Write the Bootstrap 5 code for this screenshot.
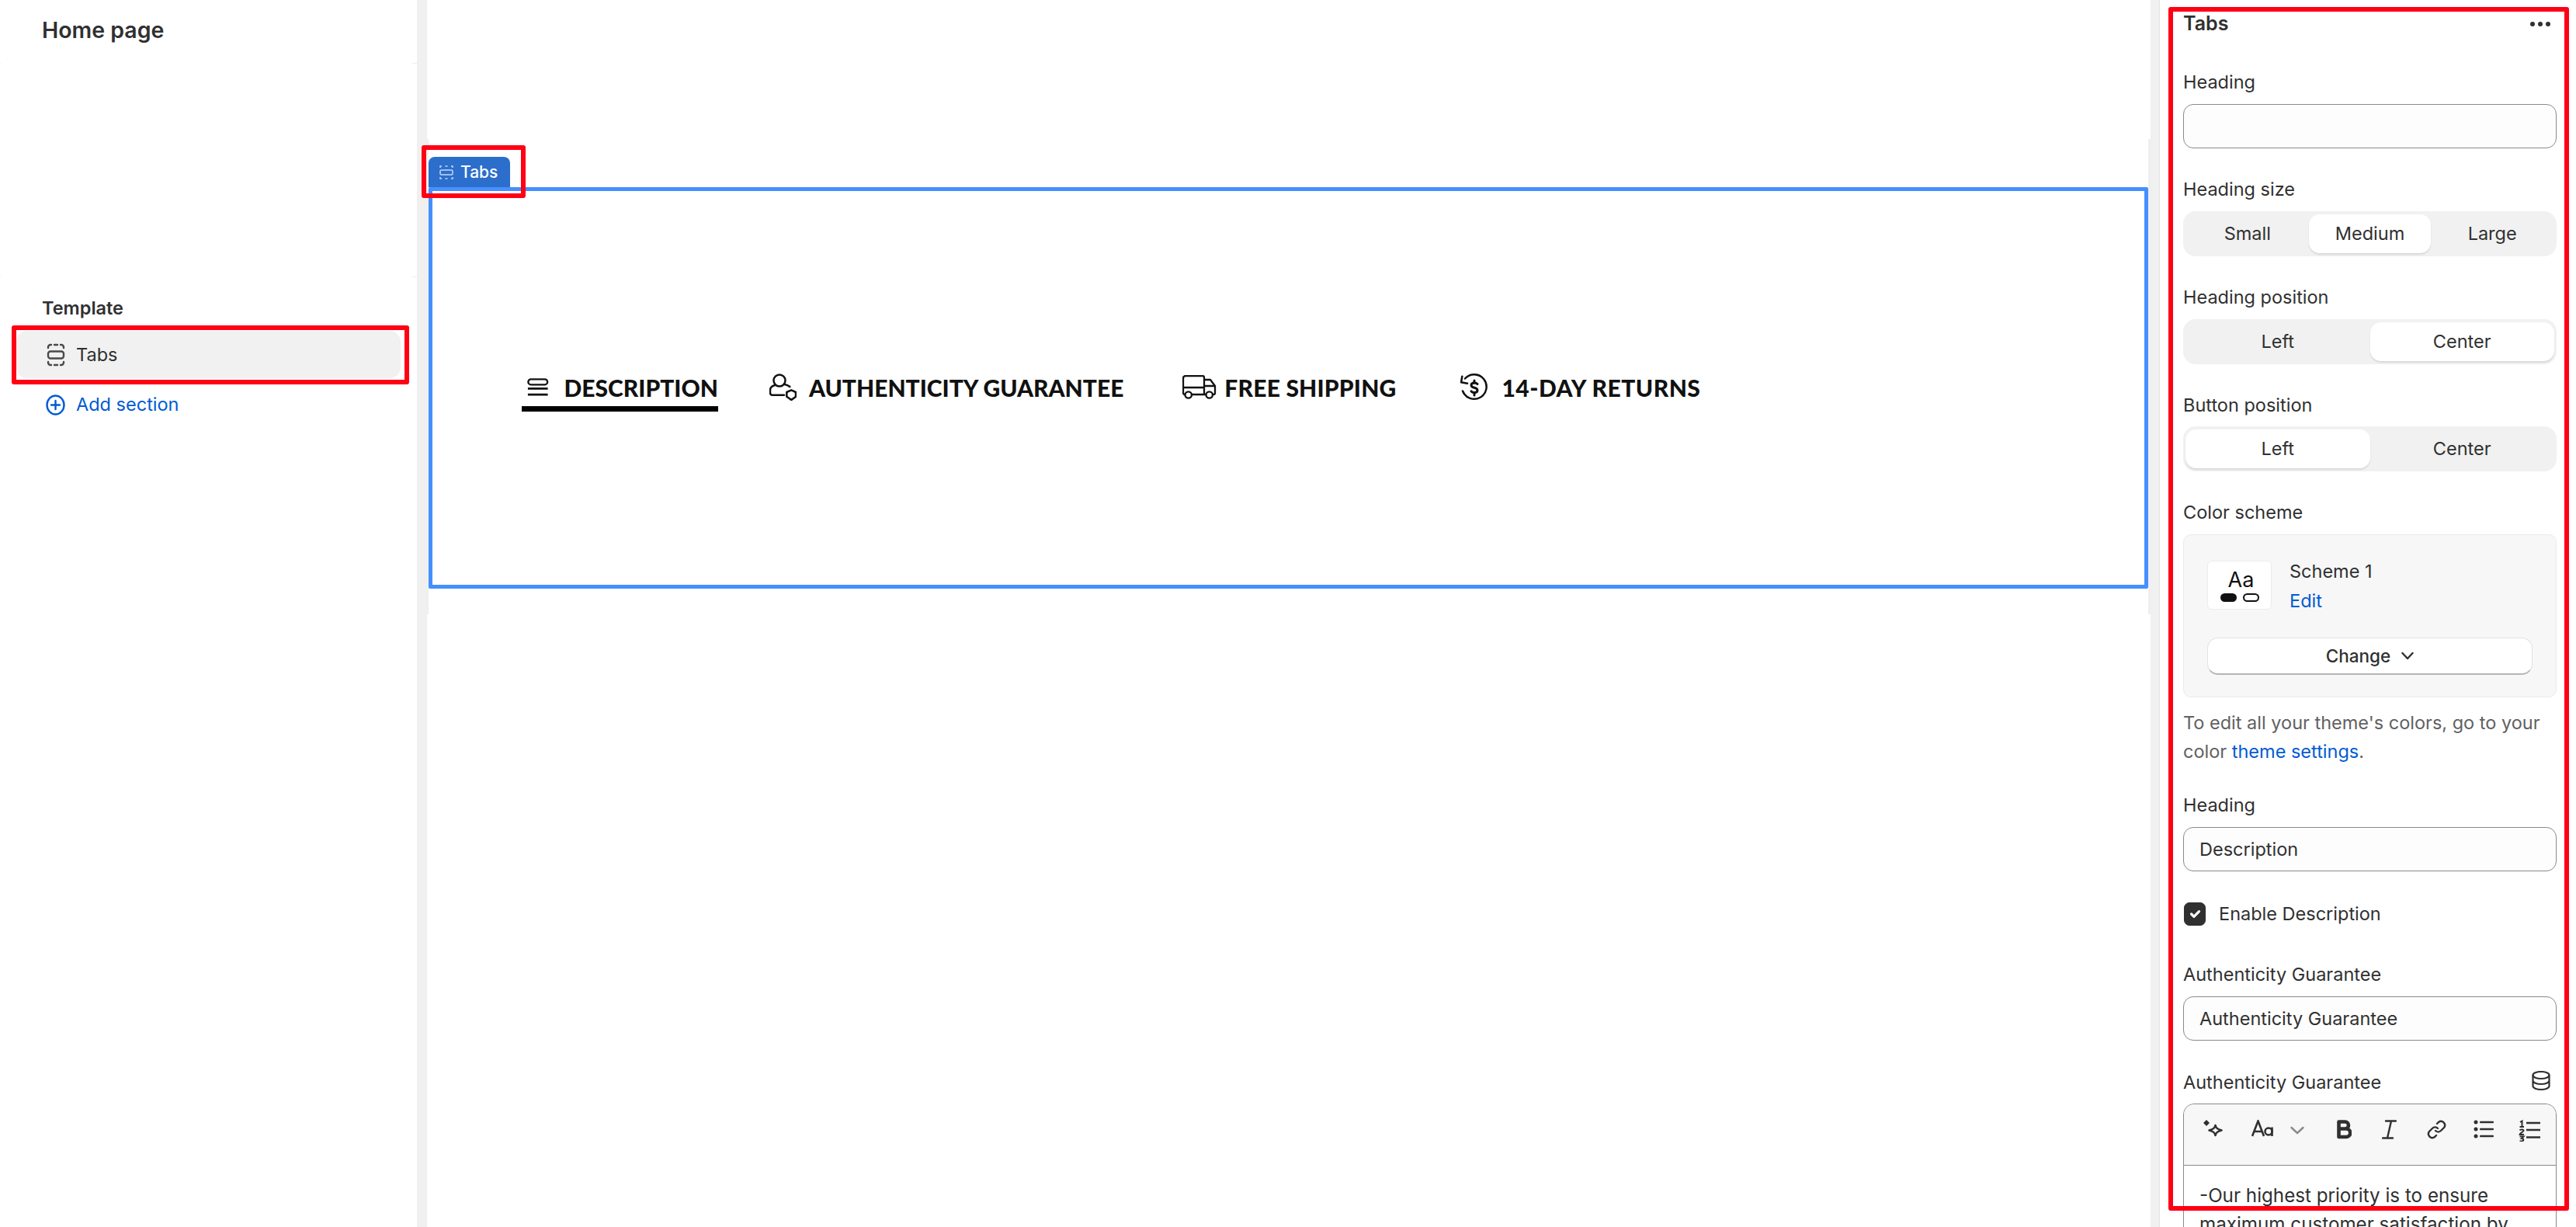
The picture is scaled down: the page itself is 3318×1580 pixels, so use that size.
<!DOCTYPE html>
<html lang="en">
<head>
<meta charset="utf-8">
<title>Home page</title>
<link href="https://cdn.jsdelivr.net/npm/bootstrap@5.3.0/dist/css/bootstrap.min.css" rel="stylesheet">
<style>
html,body{height:100%}
body{font-family:Inter,"Liberation Sans",sans-serif;font-size:23.5px;color:#303030;background:#fff;overflow:hidden;position:relative}
.shell{height:1580px}
.side-left{width:537px;flex:none;padding:0 21px;background:linear-gradient(#eee,#eee) 531px 81px/6px 1px no-repeat,linear-gradient(#eee,#eee) 531px 356px/6px 1px no-repeat,linear-gradient(#eee,#eee) 0 81px/1px 1px no-repeat,linear-gradient(#eee,#eee) 0 356px/1px 1px no-repeat}
.page-title{padding-left:33px;height:78px;line-height:78px;font-size:28.5px;font-weight:600}
.tpl-title{margin-top:304px;padding-left:33px;height:30px;line-height:30px;font-size:23.5px;font-weight:600}
.tree-row{height:61px;margin-top:14px;background:#f1f1f1;border-radius:14px;padding-left:39px;gap:14px}
.add-row{margin-top:19px;padding-left:38px;gap:14px;height:30px;color:#005bd3}
.gutter{flex:none;background:#f0f0f0}
.gutter-l{width:13px}
.gutter-r{width:12px;border-right:1px solid #e3e3e3}
.canvas{flex:1 1 auto;min-width:0}
.canvas-strip{margin-top:179px;height:612px;background:#efefef;padding:0 3px 0 2px}
.canvas-inner{height:100%;background:#fff;padding-top:23px}
.sec-tag{width:105px;height:39px;background:#2c6ecb;color:#fff;border-radius:8px 8px 0 0;font-size:21px;font-weight:500;padding-left:14px;gap:9px}
.sec-frame{height:517px;border:5px solid #458fff;border-radius:2px;padding:0 0 2px 115px}
.tab-item{font-family:Lato,"Liberation Sans",sans-serif;font-weight:900;font-size:30px;color:#111;text-transform:uppercase;white-space:nowrap;position:relative;line-height:36px}
.tab-a{gap:20px;width:253px;padding-left:7px;margin-right:66px}
.tab-a::after{content:"";position:absolute;left:0;right:0;top:42px;height:7px;background:#000}
.tab-b{gap:16px;margin-right:76px}
.tab-c{gap:10px;margin-right:83px;letter-spacing:.2px}
.tab-d{gap:18px;letter-spacing:.5px}
.side-right{width:536px;flex:none;padding:0 25px 0 30px;overflow:hidden}
.panel-head{height:62px;font-size:25px;font-weight:600}
.fld-label{height:30px;line-height:30px;margin-bottom:13px}
.fld-label-tight{margin-bottom:12px}
.fld-label-first{margin-top:29px}
.fld{margin-bottom:38px}
.fld-wide{margin-bottom:39px}
.fld-wider{margin-bottom:40px}
.fld-input.form-control{height:57px;border:1.5px solid #8a8a8a;border-radius:13px;background:#fdfdfd;font-size:23.5px;color:#303030;padding:0 20px;box-shadow:none}
.seg{background:#f1f1f1;border-radius:16px;height:58px;padding:4px 3px}
.seg-3{padding:4px}
.seg-opt{flex:1 1 0;border-radius:14px;text-align:center;line-height:50px;height:50px}
.seg-on{background:#fff;box-shadow:0 2px 2px rgba(0,0,0,.1)}
.scheme-card{height:210px;background:#f7f7f7;border:1px solid #ebebeb;border-radius:10px;padding:33px 30px 0}
.swatch{width:83px;height:63px;background:#fff;border:1px solid #ececec;border-radius:6px;padding-top:10px;line-height:1}
.swatch-aa{font-size:27px;color:#111;text-align:center;height:31px;padding-left:4px}
.swatch-pills{gap:8px}
.pill-dark,.pill-light{width:21px;height:11px;border-radius:6px;border:2px solid #111}
.pill-dark{background:#111}
.scheme-name{margin-left:23px;line-height:38px;margin-top:-5px}
.lnk{color:#005bd3;text-decoration:none}
.chg-btn.btn{height:48px;margin-top:28px;width:419px;background:#fff;border:1px solid #e3e3e3;border-bottom:2px solid #b5b5b5;border-radius:14px;font-size:22.5px;font-weight:500;color:#303030;gap:14px;padding:0}
.help-text{margin-top:15px;margin-bottom:36px;color:#616161;line-height:36.5px}
.chk-row{height:30px;margin-bottom:48px;gap:17px;padding-left:1px}
.chk-row .form-check-input{width:28px;height:30px;margin:0;background-color:#303030;border-color:#303030;border-radius:7px;background-size:22px}
.editor{border:1.5px solid #8a8a8a;border-radius:14px 14px 0 0;height:400px}
.editor-bar{height:79px;background:#f7f7f7;border-bottom:1.5px solid #8a8a8a;border-radius:14px 14px 0 0;position:relative}
.editor-body{padding:20px 20px;line-height:37px;font-size:24.2px}
.tbi{position:absolute;top:20px}
.mark-red{position:absolute;border:6px solid #ff0014;border-radius:3px;pointer-events:none}
.mark-a{left:15px;top:419px;width:512px;height:76px}
.mark-b{left:543px;top:187px;width:134px;height:68px}
.mark-c{left:2793px;top:9px;width:516px;height:1550px}
</style>
</head>
<body>
<div class="shell d-flex">
  <aside class="side-left">
    <div class="page-title">Home page</div>
    <div class="tpl-title">Template</div>
    <div class="tree-row d-flex align-items-center">
      <svg width="24" height="30" viewBox="0 0 24 30" fill="none" stroke="#4a4a4a" stroke-width="2.4" stroke-linecap="round"><path d="M2 6V5a3 3 0 0 1 3-3h1M10 2h4M18 2h1a3 3 0 0 1 3 3v1M2 24v1a3 3 0 0 0 3 3h1M10 28h4M18 28h1a3 3 0 0 0 3-3v-1"/><rect x="2" y="10.500" width="20" height="9" rx="3"/></svg>
      <span>Tabs</span>
    </div>
    <div class="add-row d-flex align-items-center">
      <svg width="25" height="27" viewBox="0 0 25 27" fill="none" stroke="#005bd3" stroke-width="2.400" stroke-linecap="round"><ellipse cx="12.500" cy="13.500" rx="11" ry="12"/><path d="M12.500 8v11M7 13.500h11"/></svg>
      <span>Add section</span>
    </div>
  </aside>
  <div class="gutter gutter-l"></div>
  <main class="canvas">
    <div class="canvas-strip">
      <div class="canvas-inner">
        <div class="sec-tag d-flex align-items-center">
          <svg width="18" height="18" viewBox="0 0 18 18" fill="none" stroke="#c3d8f5" stroke-width="1.500"><path d="M1 3V1h2M7.500 1h3M15 1h2v2M1 15v2h2M7.500 17h3M15 17h2v-2"/><rect x="1" y="6" width="16" height="6" rx="1.500"/></svg>
          <span>Tabs</span>
        </div>
        <section class="sec-frame d-flex align-items-center">
          <div class="tab-item tab-a d-flex align-items-center">
            <svg width="30" height="25" viewBox="0 0 30 25" fill="none" stroke="#111" stroke-width="2.500"><rect x="1.500" y="1.500" width="27" height="7.500" rx="3.700"/><path d="M1 14.500h28M1 23h28" stroke-width="3"/></svg>
            <span>Description</span>
          </div>
          <div class="tab-item tab-b d-flex align-items-center">
            <svg width="35" height="35" viewBox="0 0 35 35" fill="none" stroke="#111" stroke-width="2.500" stroke-linejoin="round" stroke-linecap="round"><circle cx="13" cy="9" r="7.500"/><path d="M7.700 14.700C3.500 15.800 1 18 1 21.300V25a2.700 2.700 0 0 0 3 2.700h15"/><path d="M19 13.700c3 .6 5.500 1.500 7.300 3.300"/><path d="M28.300 21.300l5.700 2.700v5.700L28.300 34l-6-4.300V24z"/></svg>
            <span>Authenticity Guarantee</span>
          </div>
          <div class="tab-item tab-c d-flex align-items-center">
            <svg width="44" height="31" viewBox="0 0 44 31" fill="none" stroke="#111" stroke-width="2.300" stroke-linejoin="round"><path d="M3.500 25H3a2 2 0 0 1-2-2V4a3 3 0 0 1 3-3h22a2 2 0 0 1 2 2v22H12M1 16h27M28 6h8l6 8v9a2 2 0 0 1-2 2h-1M30.500 25H28M28 14h14"/><circle cx="7.700" cy="25.500" r="4.200"/><circle cx="34.700" cy="25.500" r="4.200"/></svg>
            <span>Free Shipping</span>
          </div>
          <div class="tab-item tab-d d-flex align-items-center">
            <svg width="35" height="35" viewBox="0 0 35 35" fill="none" stroke="#111" stroke-width="2.500" stroke-linecap="round" stroke-linejoin="round"><path d="M6 6.500A15.800 15.800 0 1 1 3 22.500"/><path d="M2.300 3.700L1 11.300l8 1.400"/><path d="M22 13.500c-.8-1-2-1.500-4-1.500-2.500 0-4 1.300-4 3 0 4.500 8 2 8 6.500 0 1.800-1.700 3-4 3-2 0-3.300-.7-4-1.700" stroke-width="3"/><path d="M18 9v3M18 25v3" stroke-width="3"/></svg>
            <span>14-Day Returns</span>
          </div>
        </section>
      </div>
    </div>
  </main>
  <div class="gutter gutter-r"></div>
  <aside class="side-right">
    <div class="panel-head d-flex justify-content-between align-items-center">
      <span>Tabs</span>
      <svg class="me-2" width="26" height="6" viewBox="0 0 26 6" fill="#303030"><circle cx="3" cy="3" r="3"/><circle cx="13" cy="3" r="3"/><circle cx="23" cy="3" r="3"/></svg>
    </div>
    <div class="fld">
      <div class="fld-label fld-label-first">Heading</div>
      <input class="form-control fld-input" type="text" value="" aria-label="Heading">
    </div>
    <div class="fld">
      <div class="fld-label">Heading size</div>
      <div class="seg seg-3 d-flex"><div class="seg-opt">Small</div><div class="seg-opt seg-on">Medium</div><div class="seg-opt">Large</div></div>
    </div>
    <div class="fld">
      <div class="fld-label">Heading position</div>
      <div class="seg d-flex"><div class="seg-opt">Left</div><div class="seg-opt seg-on">Center</div></div>
    </div>
    <div class="fld">
      <div class="fld-label fld-label-tight">Button position</div>
      <div class="seg d-flex"><div class="seg-opt seg-on">Left</div><div class="seg-opt">Center</div></div>
    </div>
    <div>
      <div class="fld-label">Color scheme</div>
      <div class="scheme-card">
        <div class="d-flex">
          <div class="swatch">
            <div class="swatch-aa">Aa</div>
            <div class="swatch-pills d-flex justify-content-center"><span class="pill-dark"></span><span class="pill-light"></span></div>
          </div>
          <div class="scheme-name"><div>Scheme 1</div><a class="lnk d-block" href="#">Edit</a></div>
        </div>
        <button class="btn chg-btn d-flex align-items-center justify-content-center" type="button">Change
          <svg width="16" height="11" viewBox="0 0 16 11" fill="none" stroke="#303030" stroke-width="2.400" stroke-linecap="round" stroke-linejoin="round"><path d="M1.500 2l6.500 7 6.500-7"/></svg>
        </button>
      </div>
      <div class="help-text">To edit all your theme's colors, go to your color <a class="lnk" href="#">theme settings</a>.</div>
    </div>
    <div class="fld fld-wider">
      <div class="fld-label">Heading</div>
      <input class="form-control fld-input" type="text" value="Description" aria-label="Heading">
    </div>
    <div class="chk-row d-flex align-items-center">
      <input class="form-check-input" type="checkbox" checked aria-label="Enable Description">
      <span>Enable Description</span>
    </div>
    <div class="fld fld-wide">
      <div class="fld-label">Authenticity Guarantee</div>
      <input class="form-control fld-input" type="text" value="Authenticity Guarantee" aria-label="Authenticity Guarantee">
    </div>
    <div>
      <div class="fld-label fld-label-tight d-flex justify-content-between">
        <span>Authenticity Guarantee</span>
        <svg class="me-2" width="24" height="25" viewBox="0 0 24 25" fill="none" stroke="#303030" stroke-width="2.200"><ellipse cx="12" cy="5.500" rx="10.500" ry="4.500"/><path d="M1.500 5.500v14c0 2.500 4.700 4.500 10.500 4.500s10.500-2 10.500-4.500v-14M1.500 12.500c0 2.500 4.700 4.500 10.500 4.500s10.500-2 10.500-4.500"/></svg>
      </div>
      <div class="editor">
        <div class="editor-bar">
          <svg class="tbi" style="left:25px" width="26" height="26" viewBox="0 0 26 26" fill="none" stroke="#303030" stroke-width="2.600" stroke-linejoin="round"><path d="M15.500 7c.7 3.500 2.300 5.200 8 6.500-5.700 1.300-7.300 3-8 6.500-.7-3.500-2.300-5.200-8-6.500 5.700-1.300 7.300-3 8-6.500z"/><path d="M4 0l4 4-4 4-4-4z" fill="#303030" stroke="none"/></svg>
          <svg class="tbi" style="left:87px" width="28" height="22" viewBox="0 0 28 22" fill="none" stroke="#303030" stroke-width="2.600"><path d="M1 21L8.500 1.500 16 21M3.500 15h10"/><circle cx="22" cy="15" r="4.500"/><path d="M26.500 9.500V21"/></svg>
          <svg class="tbi" style="left:137px;top:28px" width="18" height="11" viewBox="0 0 18 11" fill="none" stroke="#8a8a8a" stroke-width="2.400" stroke-linecap="round" stroke-linejoin="round"><path d="M1.500 2l7.500 7 7.500-7"/></svg>
          <svg class="tbi" style="left:197px" width="19" height="25" viewBox="0 0 19 25" fill="none" stroke="#303030" stroke-width="4.600" stroke-linejoin="round"><path d="M2.500 2.500h8a4.500 4.500 0 0 1 0 9h-8zM2.500 11.500h9.500a5 5 0 0 1 0 10.500h-9.500z"/></svg>
          <svg class="tbi" style="left:255px" width="19" height="25" viewBox="0 0 19 25" fill="none" stroke="#303030" stroke-width="2.400" stroke-linecap="round"><path d="M5 1.500h13M1 23.500h13M12 1.500L7 23.500"/></svg>
          <svg class="tbi" style="left:313px" width="25" height="25" viewBox="0 0 25 25" fill="none" stroke="#303030" stroke-width="2.400" stroke-linecap="round"><path d="M11 14a5 5 0 0 0 7 0l4-4a5 5 0 0 0-7-7l-2 2"/><path d="M14 11a5 5 0 0 0-7 0l-4 4a5 5 0 0 0 7 7l2-2"/></svg>
          <svg class="tbi" style="left:373px" width="26" height="24" viewBox="0 0 26 24" fill="#303030" stroke="none"><circle cx="3" cy="3" r="2.500"/><circle cx="3" cy="12" r="2.500"/><circle cx="3" cy="21" r="2.500"/><rect x="8" y="1.800" width="18" height="2.400" rx="1"/><rect x="8" y="10.800" width="18" height="2.400" rx="1"/><rect x="8" y="19.800" width="18" height="2.400" rx="1"/></svg>
          <svg class="tbi" style="left:431px" width="28" height="28" viewBox="0 0 28 28" fill="none" stroke="#303030" stroke-width="2"><path d="M2 3l2.500-1.500V9M1.500 9h5.500M1.500 13.500c1-1.500 5-1.500 5 .5 0 1.500-5 3-5 5h5.500M1.500 21.500h5l-2.500 2.500c3 0 3 3.500 0 3.500H1.500"/><path d="M10 4h18M10 13h18M10 22.500h18" stroke-width="2.400"/></svg>
        </div>
        <div class="editor-body">-Our highest priority is to ensure maximum customer satisfaction by</div>
      </div>
    </div>
  </aside>
</div>
<div class="mark-red mark-a"></div>
<div class="mark-red mark-b"></div>
<div class="mark-red mark-c"></div>
<script src="https://cdn.jsdelivr.net/npm/bootstrap@5.3.0/dist/js/bootstrap.bundle.min.js"></script>
</body>
</html>
